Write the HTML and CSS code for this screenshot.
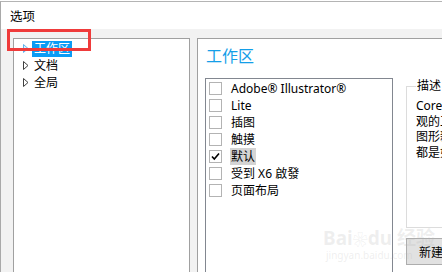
FILE: index.html
```html
<!DOCTYPE html>
<html lang="zh-CN">
<head>
<meta charset="utf-8">
<title>选项</title>
<link rel="stylesheet" href="styles.css">
</head>
<body>
<div class="window">
  <div class="title">选项</div>
  <div class="main">
    <div class="tree">
      <div class="node">
        <svg class="arrow" width="6" height="9" viewBox="0 0 6 9"><polygon points="0.5,0.5 5,4.5 0.5,8.5" fill="#dff1ff" stroke="#5fb4ee" stroke-width="1"/></svg>
        <span class="label selected">工作区</span>
      </div>
      <div class="node">
        <svg class="arrow" width="6" height="9" viewBox="0 0 6 9"><polygon points="0.5,0.5 5,4.5 0.5,8.5" fill="#fff" stroke="#404040" stroke-width="1"/></svg>
        <span class="label">文档</span>
      </div>
      <div class="node">
        <svg class="arrow" width="6" height="9" viewBox="0 0 6 9"><polygon points="0.5,0.5 5,4.5 0.5,8.5" fill="#fff" stroke="#404040" stroke-width="1"/></svg>
        <span class="label">全局</span>
      </div>
    </div>
    <div class="panel">
      <h1 class="heading">工作区</h1>
      <div class="row">
        <ul class="list">
          <li class="item"><span class="box"></span><span class="text">Adobe® Illustrator®</span></li>
          <li class="item"><span class="box"></span><span class="text">Lite</span></li>
          <li class="item"><span class="box"></span><span class="text">插图</span></li>
          <li class="item"><span class="box"></span><span class="text">触摸</span></li>
          <li class="item"><span class="box"><svg width="11" height="11" viewBox="0 0 11 11"><polyline points="2,5.5 4.3,8 9,2.5" fill="none" stroke="#000" stroke-width="1.6"/></svg></span><span class="text current">默认</span></li>
          <li class="item"><span class="box"></span><span class="text">受到 X6 啟發</span></li>
          <li class="item"><span class="box"></span><span class="text">页面布局</span></li>
        </ul>
        <div class="side">
          <fieldset class="desc">
            <legend class="legend">描述</legend>
            <p class="desc-text">CorelDRAW X7 默认工作区<br>观的工具和控件放置方式，<br>图形新手还是经验丰富的<br>都是如此。</p>
          </fieldset>
          <button class="btn" type="button">新建...</button>
        </div>
      </div>
    </div>
  </div>
  <div class="annot"></div>
  <div class="watermark"><span class="wm-big">Bai<span class="wm-paw">❀</span>du 经验</span><span class="wm-small">jingyan.baidu.com</span></div>
</div>
</body>
</html>
```
FILE: styles.css
```css
* { box-sizing: border-box; }
html, body {
  margin: 0;
  width: 442px;
  height: 272px;
  overflow: hidden;
  background: #fff;
}
body {
  font-family: "Noto Sans", "Noto Sans CJK SC", sans-serif;
  font-size: 12px;
  color: #000;
}
.window {
  position: relative;
  height: 271px;
  margin-top: 1px;
  border-left: 1px solid #a9a9a9;
  border-top: 1px solid #b4b4b4;
  overflow: hidden;
}
.title {
  height: 27px;
  padding: 3px 0 0 9px;
  line-height: 24px;
  font-size: 12.5px;
}
.main {
  display: flex;
  gap: 7px;
  height: 300px;
  padding: 9px 0 0 12px;
  background: #f2f2f2;
}
.tree {
  width: 177px;
  flex-shrink: 0;
  background: #fff;
  border: 1px solid #a0a0a0;
  padding-top: 1px;
}
.node {
  display: flex;
  align-items: center;
  height: 17px;
  padding-left: 9px;
}
.arrow { flex-shrink: 0; margin-right: 3px; }
.label {
  padding: 0 2px;
  line-height: 16px;
}
.label.selected {
  background: #0a9cf5;
  color: #fff;
}
.panel {
  flex: 1;
  min-width: 0;
  background: #fff;
  border-left: 1px solid #a0a0a0;
  border-top: 1px solid #a0a0a0;
  padding-left: 7px;
}
.heading {
  margin: 7px 0 0 1px;
  font-size: 16px;
  font-weight: normal;
  line-height: 20px;
  color: #149ee8;
}
.row {
  display: flex;
  margin-top: 12px;
}
.list {
  list-style: none;
  margin: 0;
  width: 188px;
  height: 300px;
  flex-shrink: 0;
  padding: 1px 0 0 3px;
  border: 1px solid #828790;
}
.item {
  display: flex;
  align-items: center;
  height: 17px;
}
.box {
  width: 13px;
  height: 13px;
  border: 1px solid #b3b3b3;
  margin-right: 9px;
  flex-shrink: 0;
  display: flex;
  align-items: center;
  justify-content: center;
}
.box svg { display: block; }
.text { line-height: 17px; white-space: nowrap; }
.text.current { background: #d4d4d4; padding: 0 1px; margin-left: -1px; }
.side {
  margin-left: 13px;
  width: 200px;
  flex-shrink: 0;
}
.desc {
  margin: 0;
  height: 150px;
  padding: 0 0 0 9px;
  border: 1px solid #dcdcdc;
}
.legend {
  padding: 0 1px;
  line-height: 16px;
}
.desc-text {
  margin: 0;
  padding-top: 4px;
  line-height: 15.5px;
  white-space: nowrap;
}
.btn {
  display: block;
  margin-top: 10px;
  width: 90px;
  height: 27px;
  padding: 0 0 0 12px;
  text-align: left;
  font: inherit;
  color: #000;
  background: #e1e1e1;
  border: 1px solid #adadad;
}
.annot {
  position: absolute;
  left: 6px;
  top: 27px;
  width: 84px;
  height: 22px;
  border: 3px solid #ef3b3b;
}
.watermark {
  position: absolute;
  left: 322px;
  top: 226px;
  display: flex;
  flex-direction: column;
  align-items: flex-start;
  white-space: nowrap;
  color: rgba(180, 180, 180, 0.22);
  pointer-events: none;
}
.wm-big { font-size: 19px; font-weight: bold; line-height: 20px; }
.wm-paw { font-size: 15px; }
.wm-small { font-size: 10px; line-height: 12px; padding-left: 3px; }
```
